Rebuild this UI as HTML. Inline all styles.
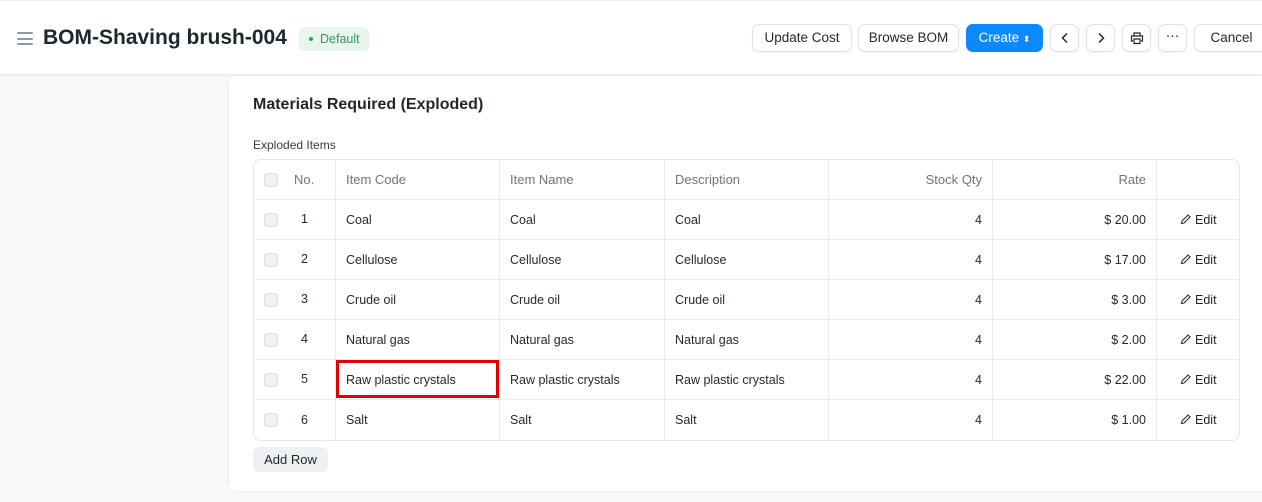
<!DOCTYPE html>
<html><head><meta charset="utf-8"><style>
*{box-sizing:border-box;margin:0;padding:0}
body{width:1262px;height:502px;overflow:hidden;background:#f8f8f8;font-family:"Liberation Sans",sans-serif;color:#1f272e;position:relative}
.hdr{position:absolute;left:0;top:0;width:1262px;height:74px;background:#fff;box-shadow:0 1px 3px rgba(0,0,0,.08);border-top:1px solid #f0f0f0}
.ham{position:absolute;left:17px;top:31px;width:16px}
.ham i{display:block;height:2px;background:#8d99a6;margin-bottom:3.5px;border-radius:1px}
.title{position:absolute;left:43px;top:25px;font-size:21px;font-weight:bold;color:#1f272e}
.badge{position:absolute;left:299px;top:26px;height:24px;padding:0 9px 0 10px;background:#e8f5ec;color:#2f9d58;border-radius:6px;font-size:12.5px;line-height:24px}
.badge:before{content:"";display:inline-block;width:4px;height:4px;border-radius:50%;background:#2f9d58;margin-right:7px;vertical-align:middle;position:relative;top:-1px}
.btn{position:absolute;top:23px;height:28px;border:1px solid #dfe2e5;border-radius:7px;background:#fff;font-size:13.5px;line-height:26px;text-align:center;color:#1f272e;box-shadow:0 1px 2px rgba(0,0,0,.05)}
.btn.p{background:#0b89ff;color:#fff;border-color:#0b89ff}
.card{position:absolute;left:228px;top:75px;width:1050px;height:417px;background:#fff;border:1px solid #ebeef0;border-radius:8px}
h2{position:absolute;left:253px;top:96px;font-size:16px;font-weight:bold}
.lbl{position:absolute;left:253px;top:138px;font-size:12px;color:#333c44}
table{position:absolute;left:253px;top:159px;width:987px;border-collapse:separate;border-spacing:0;border:1px solid #e5e8eb;border-radius:8px;font-size:12.5px}
td{height:40px;border-right:1px solid #e9ecef;border-bottom:1px solid #e9ecef;padding:0 10px;color:#1f272e}
tr:last-child td{border-bottom:none}
td:last-child{border-right:none}
tr.h td{color:#6b7580;font-size:13px}
.r{text-align:right}
.cb{display:inline-block;width:14px;height:14px;border:1px solid #dcdfe3;background:#f0f2f4;border-radius:4px;vertical-align:middle}
.ed{color:#1f272e;padding-left:23px}
.ed svg{vertical-align:-1px;margin-right:4px}
.add{position:absolute;left:253px;top:447px;width:75px;height:25px;background:#eef0f2;border-radius:6px;font-size:13px;line-height:25px;text-align:center}
.red{position:absolute;left:336px;top:360px;width:163px;height:38px;border:3px solid #e00000}
</style></head><body>
<div class="hdr">
<div class="ham"><i></i><i></i><i></i></div>
<div class="title">BOM-Shaving brush-004</div>
<div class="badge">Default</div>
<div class="btn" style="left:752px;width:100px">Update Cost</div>
<div class="btn" style="left:858px;width:101px">Browse BOM</div>
<div class="btn p" style="left:966px;width:77px">Create <span style="font-size:9px">⬍</span></div>
<div class="btn" style="left:1050px;width:29px"><svg width="10" height="12" viewBox="0 0 10 12" style="margin-top:7px"><path d="M7 1.5L2.5 6L7 10.5" fill="none" stroke="#1f272e" stroke-width="1.5"/></svg></div>
<div class="btn" style="left:1086px;width:29px"><svg width="10" height="12" viewBox="0 0 10 12" style="margin-top:7px"><path d="M3 1.5L7.5 6L3 10.5" fill="none" stroke="#1f272e" stroke-width="1.5"/></svg></div>
<div class="btn" style="left:1122px;width:29px"><svg width="14" height="14" viewBox="0 0 14 14" style="margin-top:6px"><path d="M4 5V2h6v3M3 10H1.5V5h11v5H11M4 8h6v4.5H4z" fill="none" stroke="#1f272e" stroke-width="1.2"/></svg></div>
<div class="btn" style="left:1158px;width:29px;line-height:22px">···</div>
<div class="btn" style="left:1194px;width:75px">Cancel</div>
</div>
<div class="card"></div>
<h2>Materials Required (Exploded)</h2>
<div class="lbl">Exploded Items</div>
<table>
<tr class="h"><td style="width:82px"><span class="cb"></span><span style="margin-left:16px">No.</span></td><td style="width:164px">Item Code</td><td style="width:165px">Item Name</td><td style="width:164px">Description</td><td class="r" style="width:164px">Stock Qty</td><td class="r" style="width:164px">Rate</td><td></td></tr>
<tr><td><span class="cb"></span><span style="margin-left:23px">1</span></td><td>Coal</td><td>Coal</td><td>Coal</td><td class="r">4</td><td class="r">$ 20.00</td><td class="ed"><svg width="11" height="11" viewBox="0 0 11 11"><path d="M1.5 9.5l.5-2.5 6-6 2 2-6 6z" fill="none" stroke="#1f272e" stroke-width="1"/></svg>Edit</td></tr>
<tr><td><span class="cb"></span><span style="margin-left:23px">2</span></td><td>Cellulose</td><td>Cellulose</td><td>Cellulose</td><td class="r">4</td><td class="r">$ 17.00</td><td class="ed"><svg width="11" height="11" viewBox="0 0 11 11"><path d="M1.5 9.5l.5-2.5 6-6 2 2-6 6z" fill="none" stroke="#1f272e" stroke-width="1"/></svg>Edit</td></tr>
<tr><td><span class="cb"></span><span style="margin-left:23px">3</span></td><td>Crude oil</td><td>Crude oil</td><td>Crude oil</td><td class="r">4</td><td class="r">$ 3.00</td><td class="ed"><svg width="11" height="11" viewBox="0 0 11 11"><path d="M1.5 9.5l.5-2.5 6-6 2 2-6 6z" fill="none" stroke="#1f272e" stroke-width="1"/></svg>Edit</td></tr>
<tr><td><span class="cb"></span><span style="margin-left:23px">4</span></td><td>Natural gas</td><td>Natural gas</td><td>Natural gas</td><td class="r">4</td><td class="r">$ 2.00</td><td class="ed"><svg width="11" height="11" viewBox="0 0 11 11"><path d="M1.5 9.5l.5-2.5 6-6 2 2-6 6z" fill="none" stroke="#1f272e" stroke-width="1"/></svg>Edit</td></tr>
<tr><td><span class="cb"></span><span style="margin-left:23px">5</span></td><td>Raw plastic crystals</td><td>Raw plastic crystals</td><td>Raw plastic crystals</td><td class="r">4</td><td class="r">$ 22.00</td><td class="ed"><svg width="11" height="11" viewBox="0 0 11 11"><path d="M1.5 9.5l.5-2.5 6-6 2 2-6 6z" fill="none" stroke="#1f272e" stroke-width="1"/></svg>Edit</td></tr>
<tr><td><span class="cb"></span><span style="margin-left:23px">6</span></td><td>Salt</td><td>Salt</td><td>Salt</td><td class="r">4</td><td class="r">$ 1.00</td><td class="ed"><svg width="11" height="11" viewBox="0 0 11 11"><path d="M1.5 9.5l.5-2.5 6-6 2 2-6 6z" fill="none" stroke="#1f272e" stroke-width="1"/></svg>Edit</td></tr>
</table>
<div class="red"></div>
<div class="add">Add Row</div>
</body></html>
